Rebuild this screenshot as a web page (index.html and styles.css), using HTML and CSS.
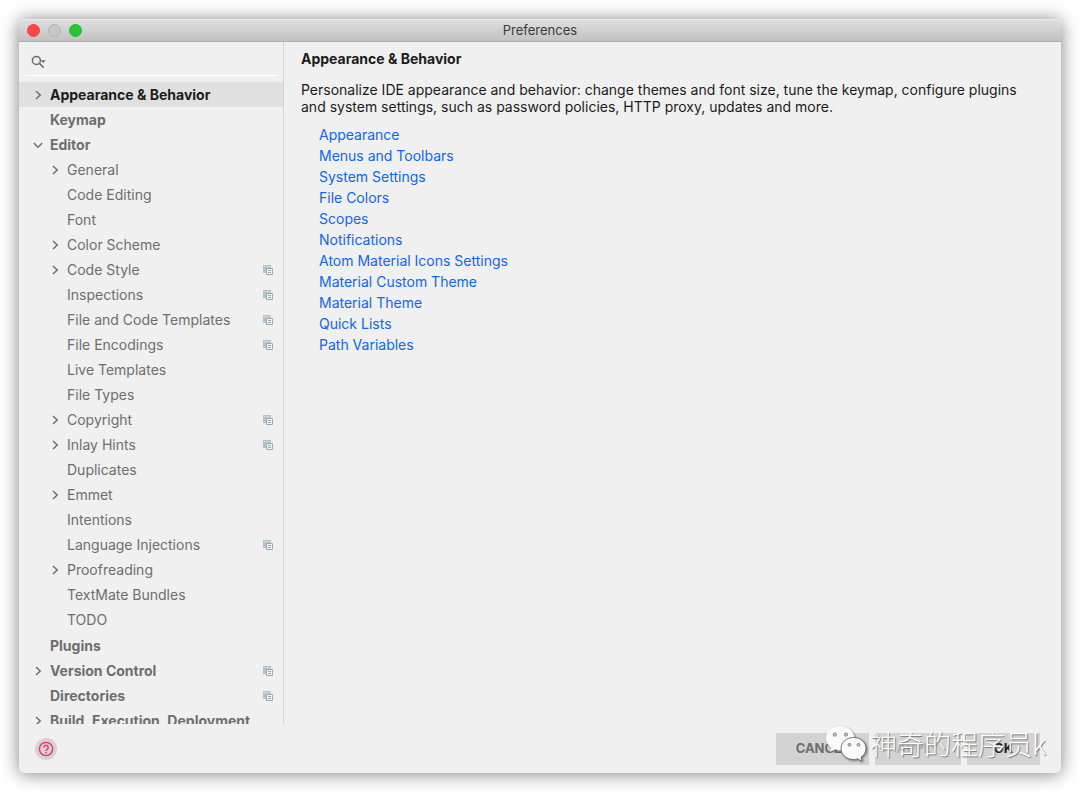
FILE: index.html
```html
<!DOCTYPE html>
<html lang="en">
<head>
<meta charset="utf-8">
<meta name="viewport" content="width=device-width, initial-scale=1">
<title>Preferences</title>
<link rel="stylesheet" href="styles.css">
</head>
<body>
<svg class="sprite" aria-hidden="true">
  <symbol id="right" viewBox="0 0 10 10"><path d="M3 1l4.2 4L3 9" fill="none" stroke="#6e6e6e" stroke-width="1.5"/></symbol>
  <symbol id="down" viewBox="0 0 10 10"><path d="M.8 3L5 7.2 9.2 3" fill="none" stroke="#6e6e6e" stroke-width="1.5"/></symbol>
  <symbol id="copy" viewBox="0 0 10 10"><path d="M0 0h8v3H3v5H0z" fill="#b7c2c8"/><path d="M1 1.500h6" stroke="#d0d8dc"/><path d="M3.500 3.500h6v6h-6z" fill="#f0f3f4" stroke="#9aaab2"/><path d="M5 5.500h3M5 7.500h3" stroke="#9aaab2"/></symbol>
</svg>
<main class="window">
  <header class="titlebar">
    <div class="lights">
      <button class="light close" aria-label="Close"></button>
      <button class="light minimize" aria-label="Minimize"></button>
      <button class="light maximize" aria-label="Zoom"></button>
    </div>
    <h1 class="title">Preferences</h1>
  </header>
  <div class="body">
    <nav class="sidebar" aria-label="Settings">
      <label class="search">
        <svg class="search-icon" viewBox="0 0 16 14" aria-label="Search"><circle cx="5.4" cy="5.4" r="4" fill="none" stroke="#6e6e6e" stroke-width="1.5"/><path d="M8.4 8.4L12.6 12.6" stroke="#6e6e6e" stroke-width="1.6"/><path d="M9.6 5.3h5.2l-2.6 2.6z" fill="#6e6e6e"/></svg>
        <input class="search-input" type="text" aria-label="Search settings">
      </label>
      <ul class="tree">
        <li><button class="row top selected"><svg class="arrow"><use href="#right"/></svg><span class="name">Appearance &amp; Behavior</span></button></li>
        <li><button class="row top"><span class="arrow"></span><span class="name">Keymap</span></button></li>
        <li><button class="row top"><svg class="arrow"><use href="#down"/></svg><span class="name">Editor</span></button>
          <ul class="branch">
            <li><button class="row child"><svg class="arrow"><use href="#right"/></svg><span class="name">General</span></button></li>
            <li><button class="row child"><span class="arrow"></span><span class="name">Code Editing</span></button></li>
            <li><button class="row child"><span class="arrow"></span><span class="name">Font</span></button></li>
            <li><button class="row child"><svg class="arrow"><use href="#right"/></svg><span class="name">Color Scheme</span></button></li>
            <li><button class="row child"><svg class="arrow"><use href="#right"/></svg><span class="name">Code Style</span><svg class="copy"><use href="#copy"/></svg></button></li>
            <li><button class="row child"><span class="arrow"></span><span class="name">Inspections</span><svg class="copy"><use href="#copy"/></svg></button></li>
            <li><button class="row child"><span class="arrow"></span><span class="name">File and Code Templates</span><svg class="copy"><use href="#copy"/></svg></button></li>
            <li><button class="row child"><span class="arrow"></span><span class="name">File Encodings</span><svg class="copy"><use href="#copy"/></svg></button></li>
            <li><button class="row child"><span class="arrow"></span><span class="name">Live Templates</span></button></li>
            <li><button class="row child"><span class="arrow"></span><span class="name">File Types</span></button></li>
            <li><button class="row child"><svg class="arrow"><use href="#right"/></svg><span class="name">Copyright</span><svg class="copy"><use href="#copy"/></svg></button></li>
            <li><button class="row child"><svg class="arrow"><use href="#right"/></svg><span class="name">Inlay Hints</span><svg class="copy"><use href="#copy"/></svg></button></li>
            <li><button class="row child"><span class="arrow"></span><span class="name">Duplicates</span></button></li>
            <li><button class="row child"><svg class="arrow"><use href="#right"/></svg><span class="name">Emmet</span></button></li>
            <li><button class="row child"><span class="arrow"></span><span class="name">Intentions</span></button></li>
            <li><button class="row child"><span class="arrow"></span><span class="name">Language Injections</span><svg class="copy"><use href="#copy"/></svg></button></li>
            <li><button class="row child"><svg class="arrow"><use href="#right"/></svg><span class="name">Proofreading</span></button></li>
            <li><button class="row child"><span class="arrow"></span><span class="name">TextMate Bundles</span></button></li>
            <li><button class="row child"><span class="arrow"></span><span class="name">TODO</span></button></li>
          </ul>
        </li>
        <li><button class="row top"><span class="arrow"></span><span class="name">Plugins</span></button></li>
        <li><button class="row top"><svg class="arrow"><use href="#right"/></svg><span class="name">Version Control</span><svg class="copy"><use href="#copy"/></svg></button></li>
        <li><button class="row top"><span class="arrow"></span><span class="name">Directories</span><svg class="copy"><use href="#copy"/></svg></button></li>
        <li><button class="row top"><svg class="arrow"><use href="#right"/></svg><span class="name">Build, Execution, Deployment</span></button></li>
      </ul>
    </nav>
    <section class="content">
      <h2 class="heading">Appearance &amp; Behavior</h2>
      <p class="intro">Personalize IDE appearance and behavior: change themes and font size, tune the keymap, configure plugins and system settings, such as password policies, HTTP proxy, updates and more.</p>
      <ul class="links">
        <li><a href="#appearance">Appearance</a></li>
        <li><a href="#menus">Menus and Toolbars</a></li>
        <li><a href="#system">System Settings</a></li>
        <li><a href="#colors">File Colors</a></li>
        <li><a href="#scopes">Scopes</a></li>
        <li><a href="#notifications">Notifications</a></li>
        <li><a href="#icons">Atom Material Icons Settings</a></li>
        <li><a href="#custom">Material Custom Theme</a></li>
        <li><a href="#theme">Material Theme</a></li>
        <li><a href="#lists">Quick Lists</a></li>
        <li><a href="#paths">Path Variables</a></li>
      </ul>
    </section>
  </div>
  <footer class="footer">
    <button class="help" aria-label="Help"><svg class="help-icon" viewBox="0 0 16 16"><circle cx="8" cy="8" r="6.6" fill="none" stroke="#f8285f" stroke-width="1.3"/><path d="M5.8 6.5a2.2 2.2 0 1 1 3.5 1.7C8.4 8.8 8 9.100 8 10" fill="none" stroke="#f8285f" stroke-width="1.3"/><path d="M7.300 11h1.400v1.400H7.300z" fill="#f8285f"/></svg></button>
    <div class="actions">
      <button class="action cancel">CANCEL</button>
      <button class="action apply" disabled>APPLY</button>
      <button class="action ok">OK</button>
    </div>
    <div class="watermark">
      <svg class="wechat" viewBox="0 0 42 37" aria-hidden="true">
        <g fill="#fafafa">
          <path d="M15 0C7 0 1 5.400 1 12.200c0 3.900 2 7.300 5.200 9.500L5 26l5-2.500c1.600.5 3.300.7 5 .7 8 0 14.300-5.300 14.300-12S23 0 15 0z"/>
          <path stroke="#666" stroke-width=".9" d="M28.500 11.500c-7 0-12.500 4.800-12.500 11s5.500 11 12.500 11c1.500 0 2.900-.2 4.200-.6l4.500 2.400-1.200-4c3.100-2 5-5.200 5-8.800 0-6.200-5.500-11-12.500-11z"/>
        </g>
        <g fill="#c8c8c8" stroke="#777" stroke-width=".9"><circle cx="9.800" cy="8.600" r="1.600"/><circle cx="21" cy="8.600" r="1.600"/><circle cx="24.500" cy="18.800" r="1.400"/><circle cx="33.500" cy="18.800" r="1.400"/></g>
      </svg>
      <span class="watermark-text">神奇的程序员k</span>
    </div>
  </footer>
</main>
</body>
</html>
```

FILE: styles.css
```css
* { box-sizing: border-box; }
body {
  margin: 0;
  height: 100vh;
  padding: 19px;
  display: flex;
  background: #fff;
  font: 14px/17px Inter, "Noto Sans CJK SC", sans-serif;
  color: #1c1c1c;
}
button, input { font: inherit; color: inherit; border: 0; padding: 0; background: none; }
ul { list-style: none; margin: 0; padding: 0; }
.sprite { position: absolute; width: 0; height: 0; }
.window {
  flex: 1;
  min-width: 0;
  display: flex;
  flex-direction: column;
  background: #f0f0f0;
  border-radius: 5px;
  box-shadow: 0 1px 18px rgba(0, 0, 0, .5);
}
.titlebar {
  display: grid;
  grid-template-columns: 1fr auto 1fr;
  align-items: center;
  height: 23px;
  border-top: 1px solid #eaeaea;
  border-bottom: 1px solid #aeaeae;
  border-radius: 5px 5px 0 0;
  background: linear-gradient(#dedede, #c2c2c2);
}
.lights { display: flex; gap: 8px; padding-left: 8px; }
.light { width: 13px; height: 13px; border-radius: 50%; border: 1px solid #b2b2b2; background: #c6c6c6; }
.close { background: #fd4747; border-color: #ee4545; }
.maximize { background: #28c732; border-color: #25b72e; }
.title { margin: 0; font-size: 13px; font-weight: 400; color: #3c3c3c; }
.body { flex: 1; min-height: 0; display: flex; }
.sidebar {
  flex: none;
  width: 265px;
  display: flex;
  flex-direction: column;
  border-right: 1px solid #d4d4d4;
}
.search {
  display: flex;
  align-items: center;
  height: 34px;
  flex: none;
  margin: 0 6px 6px;
  padding: 7px 5px 0 6px;
  border-bottom: 1px solid #fff;
}
.search-icon { width: 16px; height: 14px; }
.search-input { flex: 1; min-width: 0; outline: 0; }
.tree { flex: 1; min-height: 0; overflow: hidden; }
.branch { padding-bottom: 1px; }
.row {
  display: flex;
  align-items: center;
  width: 100%;
  height: 25px;
  padding: 0 10px 0 14px;
  color: #6e6e6e;
  text-align: left;
  white-space: nowrap;
}
.top { font-weight: 700; }
.child { padding-left: 31px; }
.selected { background: #e0e0e0; color: #1c1c1c; }
.arrow { flex: none; width: 10px; height: 10px; margin-right: 7px; }
.name { flex: 1; }
.copy { width: 10px; height: 10px; }
.content { flex: 1; min-width: 0; padding: 8px 32px 8px 17px; }
.heading { margin: 0 0 14px; font-size: 14px; font-weight: 700; }
.intro { margin: 0 0 9px; }
.links { padding-left: 18px; line-height: 21px; }
.links a { color: #0d66f5; text-decoration: none; }
.footer {
  position: relative;
  display: flex;
  align-items: center;
  justify-content: space-between;
  height: 49px;
  padding: 0 21px 0 16px;
}
.help { display: flex; align-items: center; justify-content: center; width: 22px; height: 22px; border-radius: 50%; background: #d3d3d3; }
.help-icon { width: 16px; height: 16px; }
.actions { display: flex; gap: 6px; }
.action { height: 32px; background: #d3d3d3; color: #6e6e6e; font-size: 13px; font-weight: 700; }
.cancel { min-width: 93px; }
.apply { min-width: 86px; color: #b0b0b0; }
.ok { min-width: 73px; color: #1c1c1c; }
.watermark {
  position: absolute;
  right: 15px;
  top: 0;
  display: flex;
  align-items: center;
  gap: 3px;
  pointer-events: none;
}
.wechat { width: 42px; height: 37px; filter: drop-shadow(1px 1px 1px rgba(0, 0, 0, .45)); }
.watermark-text {
  font: 300 27px/40px "Noto Sans CJK SC", sans-serif;
  color: #fff;
  white-space: nowrap;
  text-shadow: 1px 1px 1px #777;
}
```
